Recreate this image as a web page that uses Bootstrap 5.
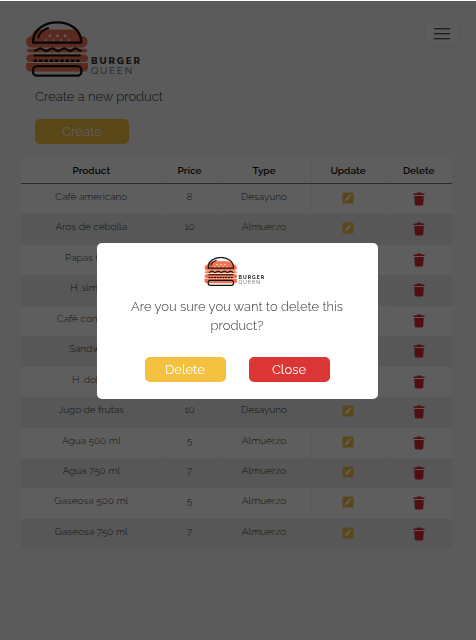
<!DOCTYPE html>
<html lang="en">
<head>
<meta charset="utf-8">
<meta name="viewport" content="width=device-width, initial-scale=1">
<title>Burger Queen</title>
<link href="https://cdn.jsdelivr.net/npm/bootstrap@5.3.0/dist/css/bootstrap.min.css" rel="stylesheet">
<style>
  body { font-family: Raleway, Lato, "Open Sans", sans-serif; font-weight: 300; font-size: 13px; line-height: 19px; background: #f7f7f7; border-top: 1px solid #fff; min-height: 100vh; font-variant-numeric: oldstyle-nums; }
  .page-shell { padding: 20px 24px 24px 21px; }
  .top-bar { margin-right: -8px; }
  .brand-logo { width: 126px; height: auto; }
  .menu-toggle { width: 36px; height: 25px; border: 1px solid #efefef; border-radius: 3px; background: #fafafa; }
  .action-btn { border: 0; border-radius: 5px; padding: 3px 0; font-size: 13px; line-height: 19px; font-weight: 400; color: #fff; width: 81px; }
  .action-btn:hover { color: #fff; opacity: .9; }
  .btn-yellow, .btn-yellow:hover { background: #f4c040; }
  .btn-red, .btn-red:hover { background: #dc3535; }
  .btn-wide { width: 94px; }
  .new-product { padding: 10px 14px 0; }
  .new-product p { margin-bottom: 13px; }
  .product-table { table-layout: fixed; height: 392px; margin-top: 13px; font-size: 10px; line-height: 14px; --bs-table-bg: #fff; --bs-table-striped-bg: #fff; --bs-table-color: #333; --bs-table-striped-color: #333; }
  .product-table tbody tr:nth-child(even) { --bs-table-bg: #ebebeb; }
  .product-table th, .product-table td { padding: 6px 2px; border: 0; border-right: 1px solid #f3f3f3; }
  .product-table th:last-child, .product-table td:last-child { border-right: 0; }
  .product-table thead th { height: 26px; padding: 5px 2px; font-weight: 600; color: #111; border-bottom: 1px solid #777; }
  .c-product { width: 141px; } .c-price { width: 55px; } .c-type { width: 94px; } .c-update { width: 74px; } .c-delete { width: 67px; }
  .icon-btn { border: 0; background: none; padding: 0; line-height: 0; margin-top: 2px; }
  .confirm-layer { display: block; top: 1px; height: calc(100% - 1px); padding-right: 2px; background: rgba(0, 0, 0, .63); }
  .confirm-layer .modal-dialog { max-width: 281px; }
  .confirm-layer .modal-content { border: 0; border-radius: 5px; padding: 13px 28px 17px; }
  .confirm-logo { width: 66px; height: 31px; }
  .confirm-text { font-size: 13px; line-height: 19px; color: #333; margin: 10px 0 22px; }
  .confirm-actions { gap: 23px; }
  .logo-word { font-size: 29px; letter-spacing: .2em; font-family: Raleway, Lato, sans-serif; }
</style>
</head>
<body>
<svg width="0" height="0" class="position-absolute" aria-hidden="true">
  <symbol id="logo" viewBox="16 16 380 170">
    <g fill="#f27350">
      <path d="M40 49Q52 40 72 41L152 42Q177 42 186 61C214 62 207 97 189 96H36C14 96 14 63 35 62Z"/>
      <rect x="22" y="100" width="182" height="11" rx="5"/>
      <path d="M36 116H190Q206 116 206 128T190 140H36Q20 140 20 128T36 116Z"/>
      <path d="M19 143H206V157Q206 168 190 168H35Q19 168 19 157Z"/>
    </g>
    <path d="M47 49C70 10 156 10 179 49Q170 41 152 41H72Q56 41 47 49Z" fill="#f7f7f7"/>
    <path d="M40 81C40 0 186 0 186 81Z" fill="none" stroke="#111" stroke-width="7" stroke-linejoin="round"/>
    <path d="M56 66Q61 45 86 37" fill="none" stroke="#111" stroke-width="6" stroke-linecap="round"/>
    <g fill="#fff"><circle cx="91" cy="61" r="4"/><circle cx="114" cy="61" r="4"/><circle cx="137" cy="61" r="4"/><circle cx="79" cy="73" r="3"/><circle cx="102" cy="73" r="3"/><circle cx="125" cy="73" r="3"/><circle cx="148" cy="73" r="3"/></g>
    <path d="M44 107L62 98L80 107L98 98L116 107L134 98L152 107L168 98L186 107" fill="none" stroke="#111" stroke-width="6" stroke-linejoin="round"/>
    <path d="M42 120H184" stroke="#111" stroke-width="6"/>
    <path d="M42 136H184" stroke="#111" stroke-width="7" stroke-dasharray="11 5"/>
    <rect x="40" y="152" width="146" height="29" rx="12" fill="none" stroke="#111" stroke-width="7"/>
    <text class="logo-word" x="215" y="147" font-weight="800" fill="#333">BURGER</text>
    <text class="logo-word" x="215" y="175" font-weight="400" fill="#555">QUEEN</text>
  </symbol>
  <symbol id="pen" viewBox="0 0 12 12">
    <rect x=".5" y=".5" width="11" height="11" rx="1.500" fill="#f4c040"/>
    <path d="M3 9L3.300 7L6.700 3.700L8.300 5.300L5 8.700ZM7.200 3.200L7.900 2.600Q8.500 2.200 9 2.800L9.300 3.100Q9.800 3.600 9.300 4.200L8.800 4.800Z" fill="#fff"/>
  </symbol>
  <symbol id="trash" viewBox="0 0 12 14">
    <path d="M.5 1.500H3.500L4.200.5H7.800L8.500 1.500H11.500V3H.5ZM1.200 4H10.800L10.200 12Q10.100 13.500 8.800 13.500H3.200Q1.900 13.500 1.800 12Z" fill="#dc2b31"/>
  </symbol>
</svg>

<div class="page-shell">
  <header class="top-bar d-flex justify-content-between align-items-start">
    <a href="#" class="ms-1" aria-label="Burger Queen"><svg class="brand-logo d-block" viewBox="0 0 380 170"><use href="#logo" width="380" height="170"/></svg></a>
    <button type="button" class="menu-toggle btn d-flex align-items-center justify-content-center p-0" aria-label="Menu">
      <svg width="16" height="12" viewBox="0 0 16 12" fill="#777"><path d="M0 0H16V1H0ZM0 5H16V6H0ZM0 10H16V11H0Z" fill="#555"/><path d="M0 1H16V2H0ZM0 6H16V7H0ZM0 11H16V12H0Z" fill="#bbb"/></svg>
    </button>
  </header>
  <section class="new-product">
    <p>Create a new product</p>
    <button type="button" class="btn action-btn btn-yellow btn-wide">Create</button>
  </section>
  <table class="table table-striped product-table text-center mb-0">
    <colgroup><col class="c-product"><col class="c-price"><col class="c-type"><col class="c-update"><col class="c-delete"></colgroup>
    <thead><tr><th scope="col">Product</th><th scope="col">Price</th><th scope="col">Type</th><th scope="col">Update</th><th scope="col">Delete</th></tr></thead>
    <tbody id="products"></tbody>
  </table>
</div>

<div class="modal confirm-layer" role="dialog" aria-modal="true" aria-labelledby="confirmText">
  <div class="modal-dialog modal-dialog-centered mx-auto">
    <div class="modal-content text-center">
      <svg class="confirm-logo d-block mx-auto" viewBox="0 0 380 170"><use href="#logo" width="380" height="170"/></svg>
      <p class="confirm-text" id="confirmText">Are you sure you want to delete this product?</p>
      <div class="confirm-actions d-flex justify-content-center">
        <button type="button" class="btn action-btn btn-yellow">Delete</button>
        <button type="button" class="btn action-btn btn-red">Close</button>
      </div>
    </div>
  </div>
</div>

<script src="https://cdn.jsdelivr.net/npm/bootstrap@5.3.0/dist/js/bootstrap.bundle.min.js"></script>
<script>
  const products = [
    ["Cafè americano", 8, "Desayuno"], ["Aros de cebolla", 10, "Almuerzo"], ["Papas fritas", 7, "Almuerzo"],
    ["H. simple", 10, "Almuerzo"], ["Cafè con leche", 8, "Desayuno"], ["Sandwich", 10, "Desayuno"],
    ["H. doble", 15, "Almuerzo"], ["Jugo de frutas", 10, "Desayuno"], ["Agua 500 ml", 5, "Almuerzo"],
    ["Agua 750 ml", 7, "Almuerzo"], ["Gaseosa 500 ml", 5, "Almuerzo"], ["Gaseosa 750 ml", 7, "Almuerzo"]
  ];
  document.getElementById("products").innerHTML = products.map(([name, price, type]) => `
    <tr><td>${name}</td><td>${price}</td><td>${type}</td>
    <td><button type="button" class="icon-btn" aria-label="Update ${name}"><svg width="12" height="12"><use href="#pen"/></svg></button></td>
    <td><button type="button" class="icon-btn" aria-label="Delete ${name}"><svg width="12" height="14"><use href="#trash"/></svg></button></td></tr>`).join("");
</script>
</body>
</html>
